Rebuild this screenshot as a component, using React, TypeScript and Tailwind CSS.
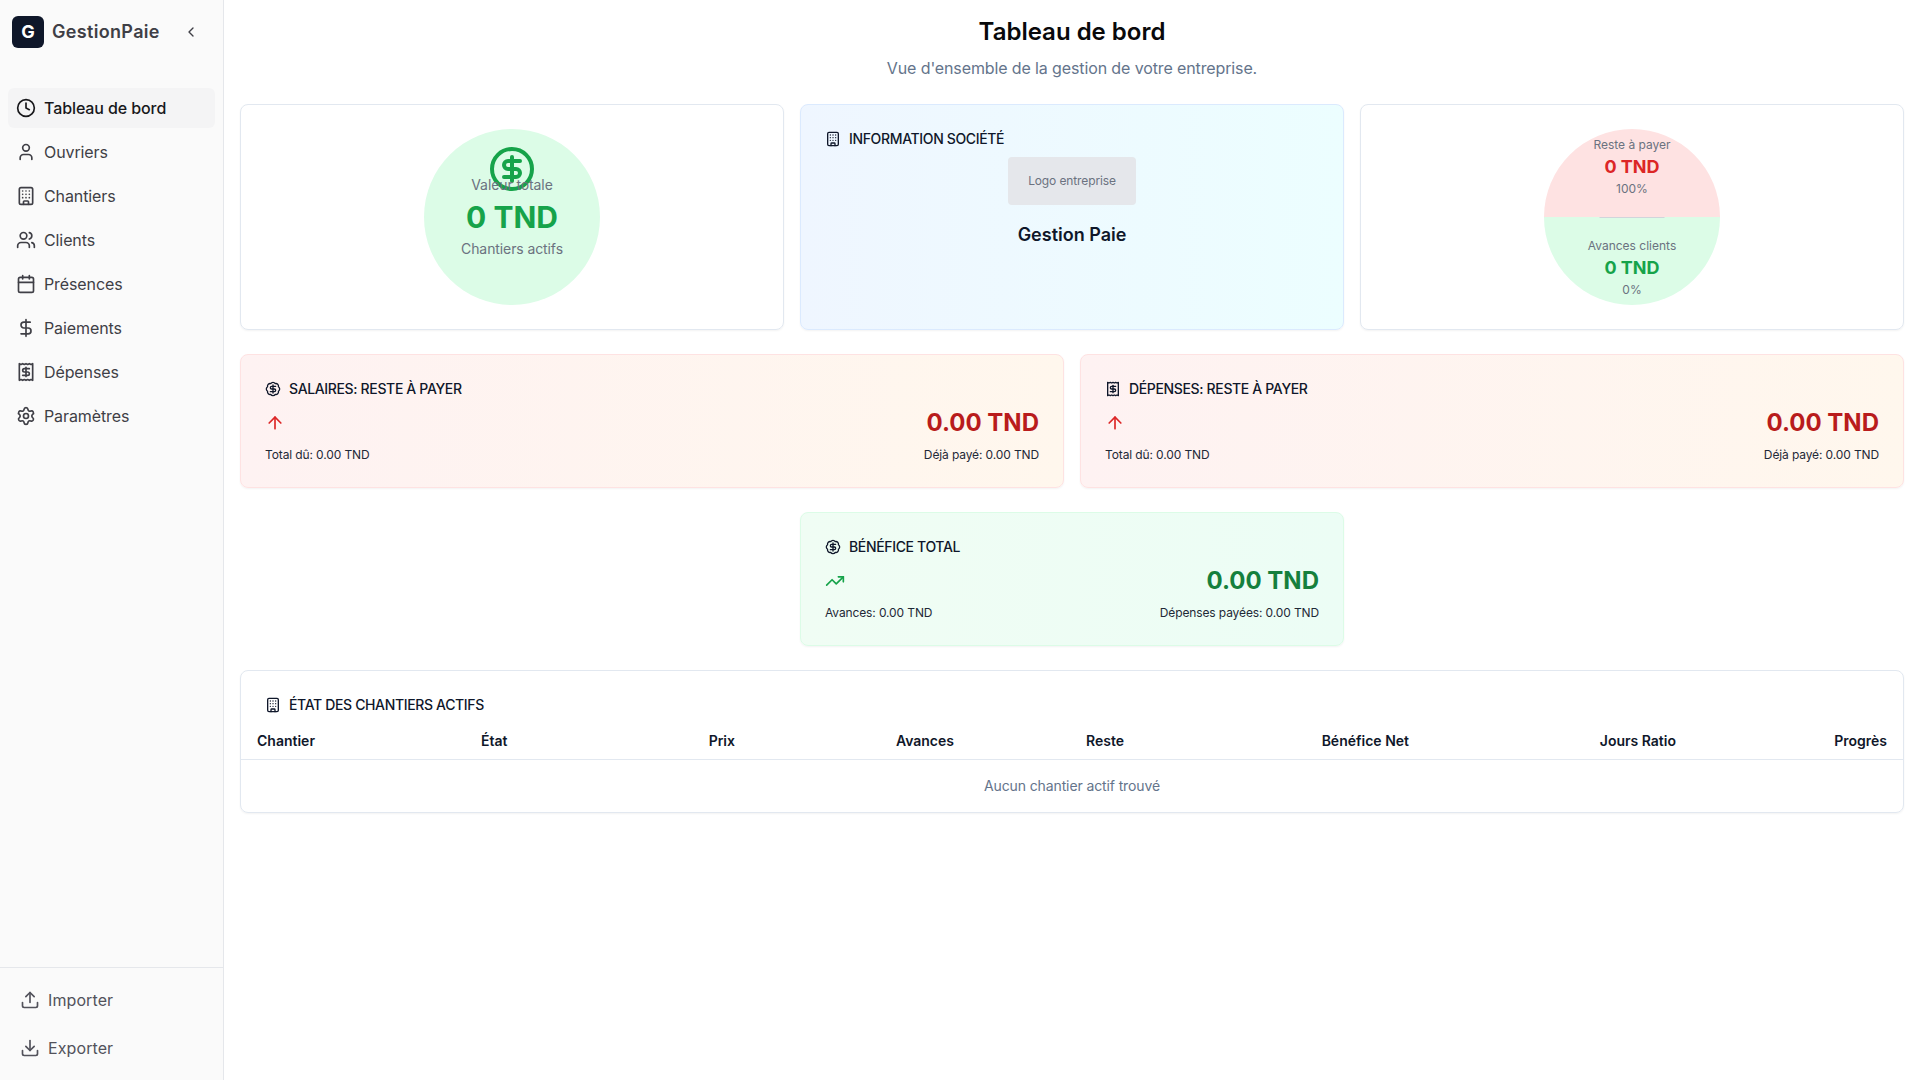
import React from 'react';
import {
  ArrowUp,
  BadgeDollarSign,
  Building,
  Calendar,
  ChevronLeft,
  CircleDollarSign,
  Clock,
  DollarSign,
  Download,
  Receipt,
  Settings,
  TrendingUp,
  Upload,
  User,
  Users,
} from 'lucide-react';

const navItems = [
  { label: 'Tableau de bord', icon: Clock, active: true },
  { label: 'Ouvriers', icon: User },
  { label: 'Chantiers', icon: Building },
  { label: 'Clients', icon: Users },
  { label: 'Présences', icon: Calendar },
  { label: 'Paiements', icon: DollarSign },
  { label: 'Dépenses', icon: Receipt },
  { label: 'Paramètres', icon: Settings },
];

const columns = [
  { label: 'Chantier', className: 'w-[224px] text-left' },
  { label: 'État', className: 'w-[190px] text-left' },
  { label: 'Prix', className: 'w-[64px] text-right' },
  { label: 'Avances', className: 'w-[219px] text-right' },
  { label: 'Reste', className: 'w-[170px] text-right' },
  { label: 'Bénéfice Net', className: 'w-[285px] text-right' },
  { label: 'Jours Ratio', className: 'w-[267px] text-right' },
  { label: 'Progrès', className: 'flex-1 text-right' },
];

const StatCard = ({
  title,
  icon: Icon,
  trend: Trend,
  trendColor,
  value,
  valueColor,
  left,
  right,
  cardClass,
}: {
  title: string;
  icon: React.ElementType;
  trend: React.ElementType;
  trendColor: string;
  value: string;
  valueColor: string;
  left: string;
  right: string;
  cardClass: string;
}) => (
  <div className={`rounded-lg border shadow-xs p-6 h-[134px] ${cardClass}`}>
    <div className="flex items-center gap-2 h-5 text-sm font-medium tracking-tight text-[#0f172a]">
      <Icon className="w-4 h-4" />
      {title}
    </div>
    <div className="flex items-center justify-between mt-2 h-8">
      <Trend className={`w-5 h-5 ${trendColor}`} />
      <div className={`text-2xl font-bold ${valueColor}`}>{value}</div>
    </div>
    <div className="flex justify-between mt-2 text-xs tracking-[-0.12px] text-[#1f2937]">
      <span>{left}</span>
      <span>{right}</span>
    </div>
  </div>
);

export default function App() {
  return (
    <div className="flex h-screen bg-white text-[#0f172a] font-['Inter',sans-serif]">
      <aside className="w-[224px] shrink-0 bg-[#fafafa] border-r border-[#e5e7eb] flex flex-col">
        <div className="flex items-center justify-between h-[64px] pl-3 pr-4">
          <div className="flex items-center gap-2">
            <div className="w-8 h-8 rounded-md bg-[#0f172a] text-white flex items-center justify-center font-bold text-lg">G</div>
            <span className="text-lg font-semibold tracking-[0.33px] text-[#3f3f46]">GestionPaie</span>
          </div>
          <ChevronLeft className="w-4 h-4 text-[#3f3f46] mr-[8px]" />
        </div>
        <nav className="flex flex-col gap-1 px-2 pt-[24px] flex-1">
          {navItems.map((item) => (
            <div
              key={item.label}
              className={`flex items-center gap-2 h-10 px-2 rounded-md text-base tracking-[-0.1px] ${item.active ? 'bg-[#f4f4f5] font-medium text-[#18181b]' : 'text-[#3f3f46]'}`}
            >
              <item.icon className="w-5 h-5" />
              {item.label}
            </div>
          ))}
        </nav>
        <div className="border-t border-[#e5e7eb] px-4 pt-[11px] pb-3 flex flex-col">
          <div className="flex items-center gap-2 h-10 mt-[1px] pl-[4px] text-base tracking-[0.1px] text-[#52525b]">
            <Upload className="w-5 h-5" />
            Importer
          </div>
          <div className="flex items-center gap-2 h-10 mt-2 pl-[4px] text-base tracking-[0.1px] text-[#52525b]">
            <Download className="w-5 h-5" />
            Exporter
          </div>
        </div>
      </aside>

      <main className="flex-1 p-4 overflow-hidden">
        <div className="text-center">
          <h1 className="text-2xl font-semibold leading-8 text-[#09090b]">Tableau de bord</h1>
          <p className="text-base leading-6 mt-2 tracking-[-0.12px] text-[#64748b]">Vue d'ensemble de la gestion de votre entreprise.</p>
        </div>

        <div className="grid grid-cols-3 gap-4 mt-6">
          <div className="rounded-lg border border-[#e2e8f0] shadow-xs h-[226px] flex items-center justify-center">
            <div className="relative w-44 h-44 rounded-full bg-[#dcfce7] flex flex-col items-center justify-center">
              <CircleDollarSign className="absolute top-4 left-1/2 -translate-x-1/2 w-12 h-12 text-[#16a34a]" />
              <div className="relative text-sm tracking-[-0.1px] text-[#6b7280]">Valeur totale</div>
              <div className="relative text-3xl font-bold text-[#16a34a] my-1">0 TND</div>
              <div className="relative text-sm tracking-[-0.1px] text-[#6b7280]">Chantiers actifs</div>
            </div>
          </div>

          <div className="rounded-lg border border-[#dbeafe] shadow-xs h-[226px] p-6 bg-gradient-to-r from-[#eff6ff] to-[#ecfeff]">
            <div className="flex items-center gap-2 h-5 text-sm font-medium tracking-tight text-[#0f172a]">
              <Building className="w-4 h-4" />
              INFORMATION SOCIÉTÉ
            </div>
            <div className="flex flex-col items-center">
              <div className="w-32 h-12 mt-2 rounded bg-[#e5e7eb] flex items-center justify-center text-xs tracking-[-0.12px] text-[#6b7280]">Logo entreprise</div>
              <div className="mt-4 text-lg font-semibold text-[#0f172a]">Gestion Paie</div>
            </div>
          </div>

          <div className="rounded-lg border border-[#e2e8f0] shadow-xs h-[226px] flex items-center justify-center">
            <div className="relative w-44 h-44 rounded-full overflow-hidden flex flex-col">
              <div className="h-1/2 shrink-0 bg-[#fee2e2] flex flex-col items-center pt-2">
                <div className="text-xs leading-4 text-[#6b7280]">Reste à payer</div>
                <div className="text-lg leading-7 font-bold text-[#dc2626]">0 TND</div>
                <div className="text-xs leading-4 text-[#6b7280]">100%</div>
              </div>
              <div className="absolute top-1/2 left-1/2 -translate-x-1/2 w-[65px] h-px bg-[#d1d5db]" />
              <div className="h-1/2 shrink-0 bg-[#dcfce7] flex flex-col items-center pt-[21px]">
                <div className="text-xs leading-4 text-[#6b7280]">Avances clients</div>
                <div className="text-lg leading-7 font-bold text-[#16a34a]">0 TND</div>
                <div className="text-xs leading-4 text-[#6b7280]">0%</div>
              </div>
            </div>
          </div>
        </div>

        <div className="grid grid-cols-2 gap-4 mt-6">
          <StatCard
            title="SALAIRES: RESTE À PAYER"
            icon={BadgeDollarSign}
            trend={ArrowUp}
            trendColor="text-[#dc2626]"
            value="0.00 TND"
            valueColor="text-[#b91c1c]"
            left="Total dû: 0.00 TND"
            right="Déjà payé: 0.00 TND"
            cardClass="border-[#fee2e2] bg-gradient-to-r from-[#fef2f2] to-[#fff7ed]"
          />
          <StatCard
            title="DÉPENSES: RESTE À PAYER"
            icon={Receipt}
            trend={ArrowUp}
            trendColor="text-[#dc2626]"
            value="0.00 TND"
            valueColor="text-[#b91c1c]"
            left="Total dû: 0.00 TND"
            right="Déjà payé: 0.00 TND"
            cardClass="border-[#fee2e2] bg-gradient-to-r from-[#fef2f2] to-[#fff7ed]"
          />
        </div>

        <div className="grid grid-cols-3 gap-4 mt-6">
          <div className="col-start-2">
            <StatCard
              title="BÉNÉFICE TOTAL"
              icon={BadgeDollarSign}
              trend={TrendingUp}
              trendColor="text-[#16a34a]"
              value="0.00 TND"
              valueColor="text-[#15803d]"
              left="Avances: 0.00 TND"
              right="Dépenses payées: 0.00 TND"
              cardClass="border-[#dcfce7] bg-gradient-to-r from-[#f0fdf4] to-[#ecfdf5]"
            />
          </div>
        </div>

        <div className="rounded-lg border border-[#e2e8f0] shadow-xs mt-6">
          <div className="flex items-center gap-2 h-5 mt-[24px] px-6 text-sm font-medium tracking-tight text-[#0f172a]">
            <Building className="w-4 h-4" />
            ÉTAT DES CHANTIERS ACTIFS
          </div>
          <div className="flex items-center h-[37px] mt-[8px] px-4 border-b border-[#e2e8f0] text-sm font-semibold">
            {columns.map((c) => (
              <div key={c.label} className={c.className}>{c.label}</div>
            ))}
          </div>
          <div className="h-[52px] flex items-center justify-center text-sm tracking-[-0.12px] text-[#64748b]">Aucun chantier actif trouvé</div>
        </div>
      </main>
    </div>
  );
}
